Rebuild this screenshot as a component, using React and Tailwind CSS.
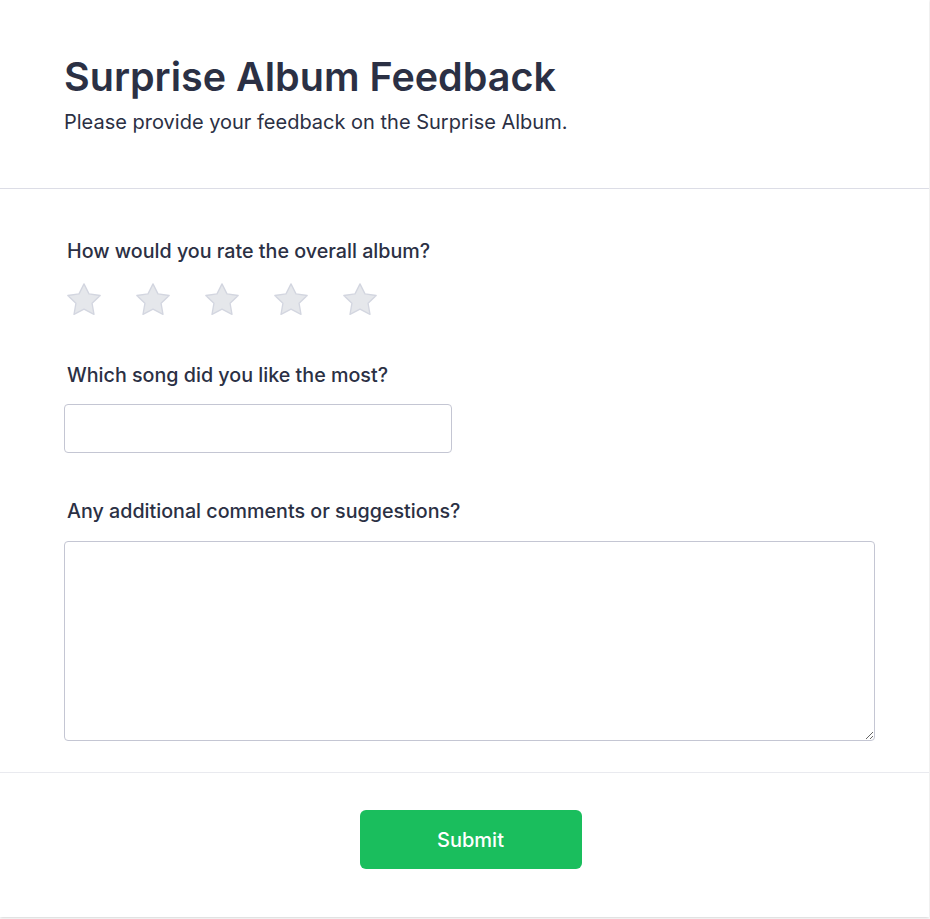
import React, { useState } from 'react'

function Star({ filled }) {
    return (
        <svg viewBox="0 0 24 24" className="w-10 h-10">
            <path
                d="M12 2.3l3 6.05 6.7.95-4.85 4.7 1.15 6.6L12 17.45 6 20.6l1.15-6.6-4.85-4.7 6.7-.95z"
                fill={filled ? '#facc15' : '#e5e7eb'}
                stroke={filled ? '#eab308' : '#d3d6e0'}
                strokeWidth="0.8"
                strokeLinejoin="round"
            />
        </svg>
    )
}

export default function App() {
    const [rating, setRating] = useState(0)

    return (
        <div className="min-h-screen bg-[#fafafa]" style={{ fontFamily: 'Inter, "Noto Sans", sans-serif' }}>
            <div className="w-[929px] h-[917px] bg-white shadow-sm text-[#2b3044]">
                {/* header */}
                <div className="px-16 pt-[53px] pb-[52px] border-b border-[#dcdde6]">
                    <h1 className="text-[39.5px] font-semibold leading-[48px]">Surprise Album Feedback</h1>
                    <p className="mt-[7px] text-xl leading-7">
                        Please provide your feedback on the Surprise Album.
                    </p>
                </div>

                {/* questions */}
                <div className="px-16 pt-[48px] pb-[31px] border-b border-[#e9eaef]">
                    <label className="block ml-[3px] text-[19.7px] font-medium leading-7">
                        How would you rate the overall album?
                    </label>
                    <div className="flex gap-[29px] mt-[15px]">
                        {[1, 2, 3, 4, 5].map(n => (
                            <button key={n} type="button" onClick={() => setRating(n)}>
                                <Star filled={n <= rating} />
                            </button>
                        ))}
                    </div>

                    <label className="block ml-[3px] mt-[41px] text-[19.7px] font-medium leading-7">
                        Which song did you like the most?
                    </label>
                    <input
                        type="text"
                        className="block mt-[15px] w-[388px] h-[49px] px-3 rounded border border-[#c4c6d3] outline-none"
                    />

                    <label className="block ml-[3px] mt-[44px] text-[19.7px] font-medium leading-7">
                        Any additional comments or suggestions?
                    </label>
                    <textarea
                        className="block mt-[16px] w-[811px] h-[200px] px-3 py-2 rounded border border-[#c4c6d3] outline-none"
                    />
                </div>

                {/* submit */}
                <div className="flex justify-center pl-3 pt-[37px]">
                    <button className="w-[222px] h-[59px] rounded-md bg-[#1abe5d] text-white text-xl font-medium">
                        Submit
                    </button>
                </div>
            </div>
        </div>
    )
}
